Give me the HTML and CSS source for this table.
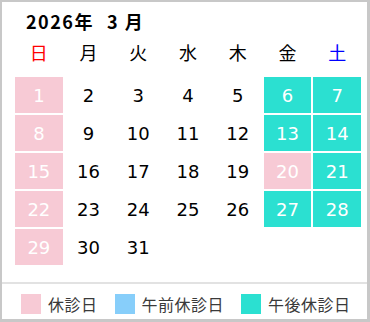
FILE: index.html
```html
<!DOCTYPE html>
<html lang="ja">
<head>
<meta charset="utf-8">
<link rel="stylesheet" href="styles.css">
</head>
<body>
<div class="cal">
  <div class="title"><span class="year">2026年</span><span class="month">3 月</span></div>
  <div class="week">
    <div class="sun">日</div><div>月</div><div>火</div><div>水</div><div>木</div><div>金</div><div class="sat">土</div>
  </div>
  <div class="days">
    <div class="off">1</div><div>2</div><div>3</div><div>4</div><div>5</div><div class="pm">6</div><div class="pm">7</div>
    <div class="off">8</div><div>9</div><div>10</div><div>11</div><div>12</div><div class="pm">13</div><div class="pm">14</div>
    <div class="off">15</div><div>16</div><div>17</div><div>18</div><div>19</div><div class="off">20</div><div class="pm">21</div>
    <div class="off">22</div><div>23</div><div>24</div><div>25</div><div>26</div><div class="pm">27</div><div class="pm">28</div>
    <div class="off">29</div><div>30</div><div>31</div>
  </div>
  <div class="legend">
    <div class="item"><span class="sw sw-off"></span>休診日</div>
    <div class="item"><span class="sw sw-am"></span>午前休診日</div>
    <div class="item"><span class="sw sw-pm"></span>午後休診日</div>
  </div>
</div>
</body>
</html>
```
FILE: styles.css
```css
html, body {
  margin: 0;
  padding: 0;
  background: #fff;
}
.cal {
  box-sizing: border-box;
  width: 370px;
  height: 322px;
  border-style: solid;
  border-color: #c8c8c8;
  border-width: 2px 3px 3px 2px;
  display: flex;
  flex-direction: column;
  font-family: "DejaVu Sans", "Noto Sans CJK JP", sans-serif;
  color: #000;
}
.title {
  margin-top: 7px;
  padding-left: 24px;
  height: 24px;
  line-height: 24px;
  font-family: "Noto Sans CJK JP", sans-serif;
  font-size: 18px;
  font-weight: bold;
  letter-spacing: 1.5px;
  white-space: pre;
}
.title .month {
  margin-left: 13px;
}
.week, .days {
  display: grid;
  grid-template-columns: repeat(7, 1fr);
  column-gap: 2px;
  width: 346px;
  margin-left: 13px;
}
.week {
  margin-top: 7px;
  height: 24px;
  line-height: 24px;
  font-family: "Noto Sans CJK JP", sans-serif;
  font-size: 18px;
  text-align: center;
}
.week .sun { color: #ff0000; }
.week .sat { color: #0000ff; }
.days {
  margin-top: 13px;
  grid-auto-rows: 36px;
  row-gap: 2px;
  font-size: 18px;
}
.days div {
  display: flex;
  align-items: center;
  justify-content: center;
}
.days .off {
  background: #f7cad5;
  color: #fff;
}
.days .pm {
  background: #2be0d1;
  color: #fff;
}
.legend {
  margin-top: auto;
  border-top: 2px solid #e2e2e2;
  height: 37px;
  box-sizing: border-box;
  padding: 10px 0 0 19px;
  display: flex;
  gap: 17px;
  font-family: "Noto Sans CJK JP", sans-serif;
  font-size: 16px;
  letter-spacing: 0.5px;
  color: #3a3a3a;
}
.item {
  display: flex;
  align-items: center;
  height: 20px;
  line-height: 20px;
}
.sw {
  width: 20px;
  height: 20px;
  margin-right: 7px;
}
.sw-off { background: #f7cad5; }
.sw-am { background: #87cefa; }
.sw-pm { background: #2be0d1; }
```
